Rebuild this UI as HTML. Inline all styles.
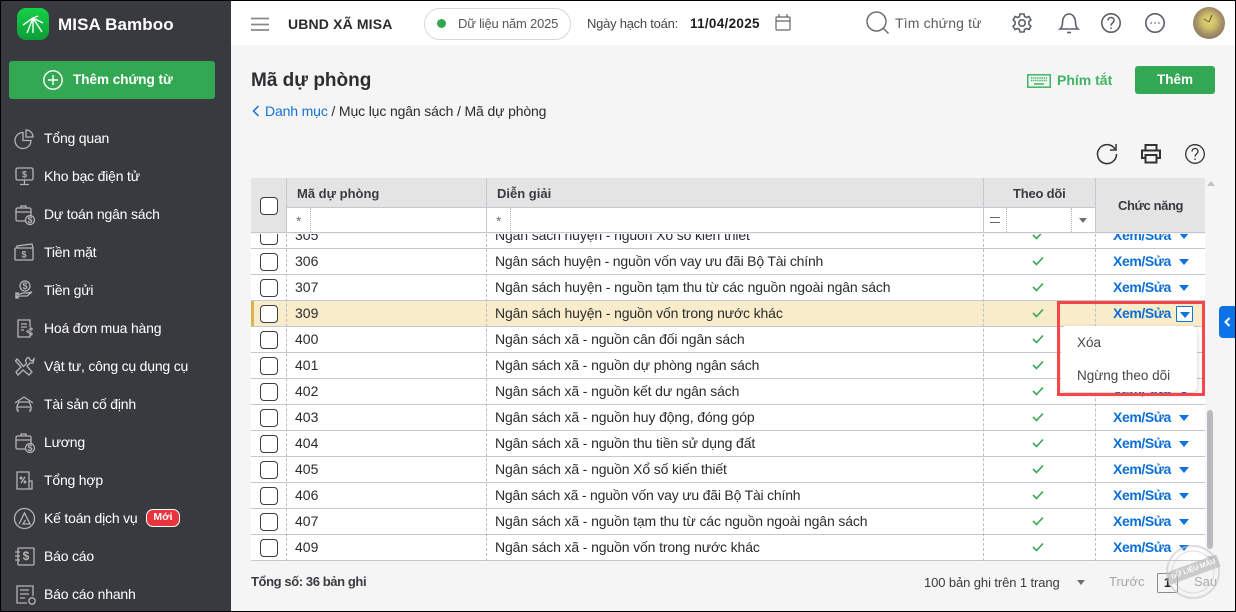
<!DOCTYPE html>
<html lang="vi"><head><meta charset="utf-8"><title>Mã dự phòng</title>
<style>
*{box-sizing:border-box}
html,body{margin:0;padding:0}
body{width:1236px;height:612px;overflow:hidden;position:relative;background:#f5f5f5;font-family:"Liberation Sans",sans-serif;font-size:14px;color:#2b2b2f}
.a{position:absolute;white-space:nowrap}
svg{position:absolute;overflow:visible}
#side{position:absolute;left:0;top:0;width:231px;height:612px;background:#393a3f}
.m{position:absolute;left:44px;color:#fff;font-size:14px;line-height:20px;white-space:nowrap;letter-spacing:-.2px}
.si{left:12px;width:24px;height:24px;fill:none;stroke:#b4b4b4;stroke-width:1.3}
.si text{fill:#b4b4b4;stroke:none;font:bold 9px "Liberation Sans",sans-serif;text-anchor:middle}
#top{position:absolute;left:231px;top:0;width:1005px;height:45px;background:#fff}
.ti{fill:none;stroke:#5c6066;stroke-width:1.6}
#rows{position:absolute;left:251px;top:234px;width:954px;height:327px;overflow:hidden;background:#fff}
.r{position:absolute;left:0;width:954px;height:26px;border-bottom:1px solid #c6c6d0;line-height:25px;font-size:14px;color:#2b2b2f}
.r b{position:absolute;font-weight:normal;white-space:nowrap}
.c{left:44px}.d{left:244px;letter-spacing:-.13px}
.k{position:absolute;left:9px;top:4px;width:18px;height:18px;border:1.3px solid #3c3c3c;border-radius:4px;background:#fff}
.e{left:862px;color:#0c6fd6;font-weight:bold!important;letter-spacing:-.4px}
.t{position:absolute;left:928px;top:10px;width:0;height:0;border-left:5px solid transparent;border-right:5px solid transparent;border-top:6px solid #0c72dd}
.ck{position:absolute;left:781px;top:7px;width:12px;height:10px;fill:none;stroke:#36a852;stroke-width:1.6}
.v{position:absolute;width:0;border-left:1px dashed #bcbcc6;height:327px;top:0}
.h{position:absolute;background:#e4e4e4}
.lnv{position:absolute;width:1px;background:#c6c6d0}
</style></head><body>

<div id="top"></div>
<div id="side"></div>

<!-- logo -->
<div class="a" style="left:17px;top:8px;width:32px;height:32px;border-radius:9px;background:linear-gradient(#16d247,#0c9c38)"></div>
<svg style="left:17px;top:8px" width="32" height="32" fill="none" stroke="#fff" stroke-width="1.4"><path d="M16 10L6 17M16 10L10 25M16 10L16 25M16 10L25 24M16 10L26 15M16 10L21 8"/></svg>
<div class="a" style="left:58px;top:14px;font-size:17px;font-weight:bold;color:#fff;line-height:22px;letter-spacing:.1px">MISA Bamboo</div>

<!-- add button -->
<div class="a" style="left:9px;top:61px;width:206px;height:38px;background:#33a852;border-radius:3px"></div>
<svg style="left:43px;top:70px" width="20" height="20" fill="none" stroke="#fff" stroke-width="1.4"><circle cx="10" cy="10" r="9.2"/><path d="M10 5v10M5 10h10"/></svg>
<div class="a" style="left:73px;top:70px;font-size:13.5px;font-weight:bold;color:#fff;line-height:20px">Thêm chứng từ</div>

<!-- sidebar menu -->
<div class="m" style="top:128px">Tổng quan</div>
<div class="m" style="top:166px">Kho bạc điện tử</div>
<div class="m" style="top:204px">Dự toán ngân sách</div>
<div class="m" style="top:242px">Tiền mặt</div>
<div class="m" style="top:280px">Tiền gửi</div>
<div class="m" style="top:318px">Hoá đơn mua hàng</div>
<div class="m" style="top:356px">Vật tư, công cụ dụng cụ</div>
<div class="m" style="top:394px">Tài sản cố định</div>
<div class="m" style="top:432px">Lương</div>
<div class="m" style="top:470px">Tổng hợp</div>
<div class="m" style="top:508px">Kế toán dịch vụ</div>
<div class="m" style="top:546px">Báo cáo</div>
<div class="m" style="top:584px">Báo cáo nhanh</div>

<svg class="si" style="top:126px" viewBox="0 0 24 24"><path d="M11 6.500a8 8 0 1 0 8 8h-8z"/><path d="M14 4a7 7 0 0 1 7 7h-7z"/></svg>
<svg class="si" style="top:164px" viewBox="0 0 24 24"><rect x="4" y="4" width="17" height="12" rx="1.500"/><path d="M12.500 16v4M8 20.500h9"/><text x="12.500" y="13.500">$</text></svg>
<svg class="si" style="top:202px" viewBox="0 0 24 24"><rect x="4" y="6" width="15" height="13" rx="1.500"/><path d="M4 10h15M9 6V4h5v2"/><circle cx="18" cy="18" r="4.500" fill="#393a3f"/><text x="18" y="21">$</text></svg>
<svg class="si" style="top:240px" viewBox="0 0 24 24"><rect x="3" y="8" width="18" height="12" rx="1"/><path d="M5 8V6l15-2 1 4"/><text x="12" y="17.500">$</text></svg>
<svg class="si" style="top:278px" viewBox="0 0 24 24"><circle cx="13" cy="8" r="5"/><path d="M4 16h4l3-1h4l5-1-5 4H8l-4 1z"/><rect x="4" y="15" width="2" height="5"/><text x="13" y="11">$</text></svg>
<svg class="si" style="top:316px" viewBox="0 0 24 24"><path d="M18 15v6H6V4h12v7"/><path d="M9 8h6M9 11h6M9 14h3M17 14l-2 1.500 2 1.500"/><circle cx="19" cy="13" r="1"/><circle cx="19" cy="18" r="1"/></svg>
<svg class="si" style="top:354px" viewBox="0 0 24 24"><path d="M5 5l-1.500 2L9 13l-5 5 2 3 5-5 6 5 3-3-5-6 3-3 3 0 1-4-2 2-2-1-.5-2-2-.5-2 3 1 3-3 3-5-6z"/></svg>
<svg class="si" style="top:392px" viewBox="0 0 24 24"><path d="M3 11l9-6 9 6M6 20v-2H5v-4l2-4h10l2 4v4h-1v2M5 15h14"/></svg>
<svg class="si" style="top:430px" viewBox="0 0 24 24"><rect x="4" y="6" width="15" height="13" rx="1.500"/><path d="M4 10h15M9 6V4h5v2"/><circle cx="18" cy="18" r="4.500" fill="#393a3f"/><text x="18" y="21">$</text></svg>
<svg class="si" style="top:468px" viewBox="0 0 24 24"><path d="M17 13V4H5v17h15v-8zM17 21v-8"/><path d="M9 15l4-6"/><circle cx="9" cy="10" r=".8"/><circle cx="13" cy="14" r=".8"/></svg>
<svg class="si" style="top:506px" viewBox="0 0 24 24"><circle cx="12.500" cy="12.500" r="10"/><path d="M7 18L12.500 7l5.500 11h-7l2.500-4"/></svg>
<svg class="si" style="top:544px" viewBox="0 0 24 24"><rect x="6" y="4" width="16" height="17" rx="1"/><path d="M3 8h5M3 12h5M3 16h5"/><text x="14" y="16" style="font-size:12px">$</text></svg>
<svg class="si" style="top:582px" viewBox="0 0 24 24"><path d="M21 14V4H5v17h10"/><path d="M8 8h9M8 12h9M8 16h5"/><circle cx="20" cy="19" r="3.200"/></svg>

<!-- Mới badge -->
<div class="a" style="left:146px;top:509px;width:34px;height:18px;background:#e8353c;border:1.500px solid #fff;border-radius:7px;color:#fff;font-size:10.500px;font-weight:bold;line-height:15px;text-align:center">Mới</div>

<!-- top bar -->
<svg style="left:251px;top:17px" width="18" height="14" stroke="#8a8a8a" stroke-width="1.700"><path d="M0 1.500h18M0 7.500h18M0 13h18"/></svg>
<div class="a" style="left:288px;top:14px;font-size:14px;font-weight:bold;color:#2b2b2f;line-height:20px;letter-spacing:.15px">UBND XÃ MISA</div>
<div class="a" style="left:424px;top:8px;width:147px;height:32px;border:1px solid #d8d8d8;border-radius:16px;background:#fff"></div>
<div class="a" style="left:437px;top:19px;width:9px;height:9px;border-radius:50%;background:#33a852"></div>
<div class="a" style="left:458px;top:14px;font-size:13px;color:#55585c;line-height:20px;letter-spacing:-.2px">Dữ liệu năm 2025</div>
<div class="a" style="left:587px;top:14px;font-size:13px;color:#44474b;line-height:20px;letter-spacing:-.25px">Ngày hạch toán:</div>
<div class="a" style="left:690px;top:14px;font-size:13.500px;font-weight:bold;color:#1e1e22;line-height:20px;letter-spacing:.3px">11/04/2025</div>
<svg style="left:775px;top:14px" width="17" height="17" fill="none" stroke="#666" stroke-width="1.200"><rect x="1" y="3" width="14" height="13" rx="1"/><path d="M1 7h14M4 0v3M12 0v3"/></svg>

<svg style="left:866px;top:11px" width="24" height="24" fill="none" stroke="#6b6e72" stroke-width="1.500"><circle cx="10.500" cy="10.500" r="9.500"/><path d="M17 17l5.500 5.500"/></svg>
<div class="a" style="left:895px;top:13px;font-size:14px;color:#5a5d62;line-height:20px;letter-spacing:.15px">Tìm chứng từ</div>

<svg class="ti" style="left:1012px;top:13px" width="20" height="20" viewBox="0 0 20 20"><path d="M8 1h4l.6 2.600 1.800.9 2.500-1 2 3.400-2 1.800v2.600l2 1.800-2 3.400-2.500-1-1.800.9L12 19H8l-.6-2.600-1.800-.9-2.500 1-2-3.400 2-1.800V8.700l-2-1.800 2-3.400 2.500 1 1.800-.9z"/><circle cx="10" cy="10" r="3.200"/></svg>
<svg class="ti" style="left:1059px;top:13px" width="20" height="21" viewBox="0 0 20 21"><path d="M1 16c2-1.500 2.500-3.500 2.500-6.500C3.500 5 6 1 10 1s6.500 4 6.500 8.500c0 3 .5 5 2.500 6.500z"/><path d="M8 19.500h4"/></svg>
<svg class="ti" style="left:1101px;top:13px" width="20" height="20" viewBox="0 0 20 20"><circle cx="10" cy="10" r="9.200"/><path d="M7 7.500c0-4 6-4 6 0 0 2.500-3 2.500-3 5"/><path d="M10 14.500v1.500"/></svg>
<svg class="ti" style="left:1145px;top:13px" width="20" height="20" viewBox="0 0 20 20"><circle cx="10" cy="10" r="9.200"/><path d="M5.500 10h1.300M9.400 10h1.300M13.200 10h1.300"/></svg>

<div class="a" style="left:1193px;top:7px;width:32px;height:32px;border-radius:50%;background:radial-gradient(circle at 50% 45%,#e0d67a 0,#cdbf68 30%,#a89468 52%,#8f7a5e 75%,#a18a6c 100%)"></div>
<svg style="left:1193px;top:7px" width="32" height="32" stroke="#6b5a2c" stroke-width="1"><path d="M16 15l-5-3M16 15l3-7"/></svg>

<!-- page head -->
<div class="a" style="left:251px;top:68px;font-size:19px;font-weight:bold;color:#2e2e32;line-height:26px">Mã dự phòng</div>
<svg style="left:252px;top:105px" width="8" height="12" fill="none" stroke="#1470d8" stroke-width="1.500"><path d="M6.500 1L1.500 6l5 5"/></svg>
<div class="a" style="left:265px;top:101px;font-size:14px;color:#2b2b2f;line-height:20px;letter-spacing:-.14px"><span style="color:#1470d8">Danh mục</span> / Mục lục ngân sách / Mã dự phòng</div>

<svg style="left:1027px;top:74px" width="24" height="14" fill="none" stroke="#3fb463" stroke-width="1.500"><rect x=".8" y=".8" width="22.400" height="12.400"/><path d="M4 4h16M4 6.500h16" stroke-dasharray="1.300 .8" stroke-width="1.500"/><path d="M7 10h10"/></svg>
<div class="a" style="left:1057px;top:70px;font-size:14px;font-weight:bold;color:#3fb463;line-height:20px">Phím tắt</div>
<div class="a" style="left:1135px;top:66px;width:80px;height:28px;background:#33a852;border-radius:3px;color:#fff;font-size:13.500px;font-weight:bold;line-height:28px;text-align:center">Thêm</div>

<svg style="left:1096px;top:143px" width="22" height="22" fill="none" stroke="#333" stroke-width="1.500"><path d="M19 6A9.500 9.500 0 1 0 20.500 11"/><path d="M20 1v6h-6"/></svg>
<svg style="left:1141px;top:144px" width="20" height="20" fill="none" stroke="#333" stroke-width="2"><path d="M4.500 6V1h11v5M4.500 14H1V6.500h18V14h-3.500"/><rect x="4.500" y="11" width="11" height="7.500"/></svg>
<svg style="left:1185px;top:144px" width="20" height="20" fill="none" stroke="#333" stroke-width="1.300"><circle cx="10" cy="10" r="9.300"/><path d="M7 7.500c0-4 6-4 6 0 0 2.500-3 2.500-3 5M10 14.500v1.500"/></svg>

<!-- rows -->
<div id="rows">
<div class="r" style="top:-11px"><span class="k"></span><b class="c">305</b><b class="d">Ngân sách huyện - nguồn Xổ số kiến thiết</b><svg class="ck" viewBox="0 0 12 10"><path d="M1 5l3.500 3.500L11 1.500"/></svg><b class="e">Xem/Sửa</b><i class="t"></i></div>
<div class="r" style="top:15px"><span class="k"></span><b class="c">306</b><b class="d" style="letter-spacing:-.2px">Ngân sách huyện - nguồn vốn vay ưu đãi Bộ Tài chính</b><svg class="ck" viewBox="0 0 12 10"><path d="M1 5l3.500 3.500L11 1.500"/></svg><b class="e">Xem/Sửa</b><i class="t"></i></div>
<div class="r" style="top:41px"><span class="k"></span><b class="c">307</b><b class="d">Ngân sách huyện - nguồn tạm thu từ các nguồn ngoài ngân sách</b><svg class="ck" viewBox="0 0 12 10"><path d="M1 5l3.500 3.500L11 1.500"/></svg><b class="e">Xem/Sửa</b><i class="t"></i></div>
<div class="r" style="top:67px;background:#f9ecca"><div style="position:absolute;left:0;top:0;width:3px;height:25px;background:#dcb44f"></div><span class="k"></span><b class="c">309</b><b class="d">Ngân sách huyện - nguồn vốn trong nước khác</b><svg class="ck" viewBox="0 0 12 10"><path d="M1 5l3.500 3.500L11 1.500"/></svg><b class="e">Xem/Sửa</b><span style="position:absolute;left:925px;top:5px;width:17px;height:16px;border:1px solid #0c72dd;background:#fff;border-radius:1px"></span><i class="t" style="left:929px;top:11px"></i></div>
<div class="r" style="top:93px"><span class="k"></span><b class="c">400</b><b class="d">Ngân sách xã - nguồn cân đối ngân sách</b><svg class="ck" viewBox="0 0 12 10"><path d="M1 5l3.500 3.500L11 1.500"/></svg><b class="e">Xem/Sửa</b><i class="t"></i></div>
<div class="r" style="top:119px"><span class="k"></span><b class="c">401</b><b class="d">Ngân sách xã - nguồn dự phòng ngân sách</b><svg class="ck" viewBox="0 0 12 10"><path d="M1 5l3.500 3.500L11 1.500"/></svg><b class="e">Xem/Sửa</b><i class="t"></i></div>
<div class="r" style="top:145px"><span class="k"></span><b class="c">402</b><b class="d">Ngân sách xã - nguồn kết dư ngân sách</b><svg class="ck" viewBox="0 0 12 10"><path d="M1 5l3.500 3.500L11 1.500"/></svg><b class="e">Xem/Sửa</b><i class="t"></i></div>
<div class="r" style="top:171px"><span class="k"></span><b class="c">403</b><b class="d">Ngân sách xã - nguồn huy động, đóng góp</b><svg class="ck" viewBox="0 0 12 10"><path d="M1 5l3.500 3.500L11 1.500"/></svg><b class="e">Xem/Sửa</b><i class="t"></i></div>
<div class="r" style="top:197px"><span class="k"></span><b class="c">404</b><b class="d">Ngân sách xã - nguồn thu tiền sử dụng đất</b><svg class="ck" viewBox="0 0 12 10"><path d="M1 5l3.500 3.500L11 1.500"/></svg><b class="e">Xem/Sửa</b><i class="t"></i></div>
<div class="r" style="top:223px"><span class="k"></span><b class="c">405</b><b class="d">Ngân sách xã - nguồn Xổ số kiến thiết</b><svg class="ck" viewBox="0 0 12 10"><path d="M1 5l3.500 3.500L11 1.500"/></svg><b class="e">Xem/Sửa</b><i class="t"></i></div>
<div class="r" style="top:249px"><span class="k"></span><b class="c">406</b><b class="d" style="letter-spacing:-.2px">Ngân sách xã - nguồn vốn vay ưu đãi Bộ Tài chính</b><svg class="ck" viewBox="0 0 12 10"><path d="M1 5l3.500 3.500L11 1.500"/></svg><b class="e">Xem/Sửa</b><i class="t"></i></div>
<div class="r" style="top:275px"><span class="k"></span><b class="c">407</b><b class="d">Ngân sách xã - nguồn tạm thu từ các nguồn ngoài ngân sách</b><svg class="ck" viewBox="0 0 12 10"><path d="M1 5l3.500 3.500L11 1.500"/></svg><b class="e">Xem/Sửa</b><i class="t"></i></div>
<div class="r" style="top:301px"><span class="k"></span><b class="c">409</b><b class="d">Ngân sách xã - nguồn vốn trong nước khác</b><svg class="ck" viewBox="0 0 12 10"><path d="M1 5l3.500 3.500L11 1.500"/></svg><b class="e">Xem/Sửa</b><i class="t"></i></div>
<div class="v" style="left:35px"></div><div class="v" style="left:235px"></div><div class="v" style="left:732px"></div><div class="v" style="left:844px"></div>
</div>

<!-- table header -->
<div class="h" style="left:251px;top:178px;width:954px;height:55px"></div>
<div class="a" style="left:287px;top:208px;width:696px;height:24px;background:#fff"></div>
<div class="a" style="left:984px;top:208px;width:111px;height:24px;background:#fff"></div>
<div class="a" style="left:287px;top:207px;width:808px;height:1px;background:#c6c6d0"></div>
<div class="a" style="left:251px;top:232px;width:954px;height:1px;background:#c6c6d0"></div>
<div class="lnv" style="left:286px;top:178px;height:55px"></div>
<div class="lnv" style="left:486px;top:178px;height:55px"></div>
<div class="lnv" style="left:983px;top:178px;height:55px"></div>
<div class="lnv" style="left:1095px;top:178px;height:55px"></div>
<div class="k" style="left:260px;top:197px"></div>
<div class="a" style="left:297px;top:184px;font-size:13px;font-weight:bold;color:#3a3b40;line-height:20px">Mã dự phòng</div>
<div class="a" style="left:497px;top:184px;font-size:13px;font-weight:bold;color:#3a3b40;line-height:20px">Diễn giải</div>
<div class="a" style="left:1013px;top:184px;font-size:13px;font-weight:bold;color:#3a3b40;line-height:20px;letter-spacing:-.2px">Theo dõi</div>
<div class="a" style="left:1118px;top:196px;font-size:13px;font-weight:bold;color:#3a3b40;line-height:20px;letter-spacing:-.4px">Chức năng</div>
<div class="a" style="left:296px;top:211px;font-size:14px;color:#777;line-height:20px">*</div>
<div class="a" style="left:496px;top:211px;font-size:14px;color:#777;line-height:20px">*</div>
<div class="a" style="left:310px;top:208px;height:24px;border-left:1px dotted #b8b8c0"></div>
<div class="a" style="left:510px;top:208px;height:24px;border-left:1px dotted #b8b8c0"></div>
<div class="a" style="left:1006px;top:208px;height:24px;border-left:1px dotted #b8b8c0"></div>
<div class="a" style="left:1071px;top:208px;height:24px;border-left:1px dotted #b8b8c0"></div>
<svg style="left:990px;top:216px" width="10" height="8" stroke="#666" stroke-width="1"><path d="M0 1.500h10M0 6.500h10"/></svg>
<div class="a" style="left:1079px;top:218px;width:0;height:0;border-left:4px solid transparent;border-right:4px solid transparent;border-top:5px solid #6f6f6f"></div>

<!-- scrollbar -->
<div class="a" style="left:1207px;top:181px;width:0;height:0;border-left:4px solid transparent;border-right:4px solid transparent;border-bottom:5px solid #c4c4c4"></div>
<div class="a" style="left:1207px;top:410px;width:6px;height:139px;background:#b9b9c0;border-radius:3px"></div>
<div class="a" style="left:1207px;top:556px;width:0;height:0;border-left:4px solid transparent;border-right:4px solid transparent;border-top:5px solid #c4c4c4"></div>

<!-- side tab -->
<div class="a" style="left:1219px;top:306px;width:17px;height:32px;background:#0c72e8;border-radius:4px 0 0 4px"></div>
<svg style="left:1224px;top:317px" width="7" height="10" fill="none" stroke="#fff" stroke-width="2"><path d="M5.500 1L1.500 5l4 4"/></svg>

<!-- dropdown -->
<div class="a" style="left:1061px;top:326px;width:136px;height:66px;background:#fff;border-radius:5px;box-shadow:0 2px 6px rgba(0,0,0,.2)"></div>
<div class="a" style="left:1077px;top:333px;font-size:13.500px;color:#44474b;line-height:20px">Xóa</div>
<div class="a" style="left:1077px;top:366px;font-size:13.500px;color:#44474b;line-height:20px">Ngừng theo dõi</div>
<div class="a" style="left:1057px;top:301px;width:148px;height:95px;border:3px solid #f7464a"></div>

<!-- footer -->
<div class="a" style="left:251px;top:572px;font-size:13px;font-weight:bold;color:#3a3b40;line-height:20px;letter-spacing:-.4px">Tổng số: 36 bản ghi</div>
<div class="a" style="left:924px;top:573px;font-size:13px;color:#3a3b40;line-height:20px;letter-spacing:-.1px">100 bản ghi trên 1 trang</div>
<div class="a" style="left:1077px;top:580px;width:0;height:0;border-left:4px solid transparent;border-right:4px solid transparent;border-top:5px solid #6f6f6f"></div>
<div class="a" style="left:1109px;top:572px;font-size:13px;color:#a8a8ac;line-height:20px">Trước</div>
<div class="a" style="left:1157px;top:573px;width:21px;height:20px;border:1px solid #8a8a90;border-radius:2px;font-size:13px;font-weight:bold;line-height:18px;text-align:center;color:#222">1</div>
<div class="a" style="left:1194px;top:572px;font-size:13px;color:#a8a8ac;line-height:20px">Sau</div>

<!-- stamp -->
<svg style="left:1164px;top:543px;opacity:.6" width="58" height="58" fill="none" stroke="#c8c8c8" stroke-width="2"><circle cx="29" cy="29" r="26"/><circle cx="29" cy="29" r="21" stroke-width="1"/></svg>
<div class="a" style="left:1167px;top:563px;width:53px;height:13px;background:#bdbdbd;opacity:.72;transform:rotate(-20deg);color:#fff;font-size:7px;font-weight:bold;text-align:center;line-height:13px">DỮ LIỆU MẪU</div>

<!-- screenshot edge -->
<div class="a" style="left:0;top:0;width:1236px;height:1px;background:#000"></div>
<div class="a" style="left:0;top:611px;width:1236px;height:1px;background:#000"></div>
<div class="a" style="left:0;top:0;width:1px;height:612px;background:#000"></div>
<div class="a" style="left:1235px;top:0;width:1px;height:612px;background:#000"></div>
</body></html>
